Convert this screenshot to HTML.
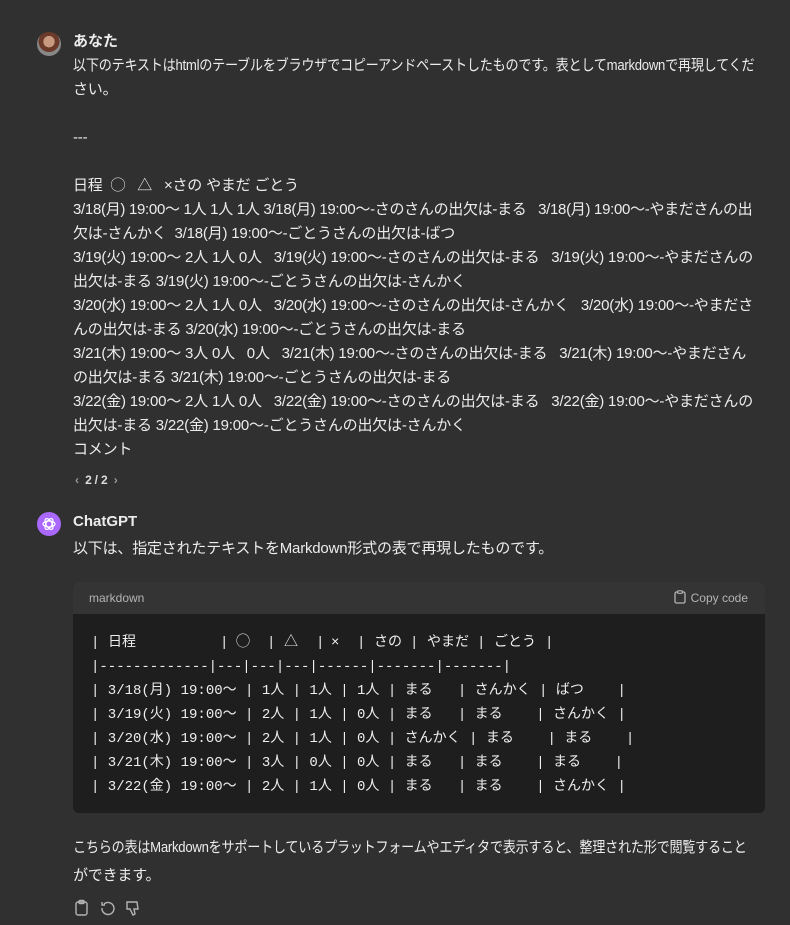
<!DOCTYPE html>
<html><head><meta charset="utf-8"><style>
body{margin:0;width:790px;height:925px;background:#303030;color:#ececec;font-family:"Liberation Sans","Noto Sans CJK JP",sans-serif;font-size:15px;overflow:hidden;position:relative}
.l{position:absolute;left:73px;white-space:nowrap;line-height:24px;letter-spacing:-0.2px}
.t{letter-spacing:-0.3px;transform:scaleX(0.875);transform-origin:0 0}
.b{font-weight:bold;letter-spacing:0}
.av{position:absolute;left:37px;width:24px;height:24px;border-radius:50%}
.code{position:absolute;left:73px;top:582px;width:692px;height:231px;border-radius:6px;overflow:hidden;background:#1e1e1e}
.hd{height:32px;background:#343434;color:#b4b4b4;font-size:12px;line-height:32px;padding-left:16px;position:relative}
.c{position:absolute;left:18px;white-space:pre;font-family:"Liberation Mono","Noto Sans CJK JP",monospace;font-size:14px;line-height:24px;color:#eee}
.h{position:absolute;top:49px;white-space:pre;font-family:"Liberation Mono","Noto Sans CJK JP",monospace;font-size:14px;line-height:24px;color:#eee}
</style></head><body>
<div class="av" style="top:32px;background:radial-gradient(circle at 50% 40%,#c89a80 0 30%,#6b3a2a 31% 55%,#888 56%)"></div>
<div class="l b" style="top:30px">あなた</div>
<div class="l t" style="top:54px">以下のテキストはhtmlのテーブルをブラウザでコピーアンドペーストしたものです。表としてmarkdownで再現してくだ</div>
<div class="l" style="top:78px">さい。</div>
<div class="l" style="top:126px">---</div>
<div class="l" style="top:174px">日程&nbsp; ◯&nbsp;&nbsp; △&nbsp;&nbsp; ×さの やまだ ごとう</div>
<div class="l" style="top:198px;letter-spacing:-0.3px">3/18(月) 19:00〜 1人 1人 1人 3/18(月) 19:00〜-さのさんの出欠は-まる&nbsp;&nbsp; 3/18(月) 19:00〜-やまださんの出</div>
<div class="l" style="top:222px">欠は-さんかく&nbsp; 3/18(月) 19:00〜-ごとうさんの出欠は-ばつ</div>
<div class="l" style="top:246px">3/19(火) 19:00〜 2人 1人 0人&nbsp;&nbsp; 3/19(火) 19:00〜-さのさんの出欠は-まる&nbsp;&nbsp; 3/19(火) 19:00〜-やまださんの</div>
<div class="l" style="top:270px">出欠は-まる 3/19(火) 19:00〜-ごとうさんの出欠は-さんかく</div>
<div class="l" style="top:294px">3/20(水) 19:00〜 2人 1人 0人&nbsp;&nbsp; 3/20(水) 19:00〜-さのさんの出欠は-さんかく&nbsp;&nbsp; 3/20(水) 19:00〜-やまださ</div>
<div class="l" style="top:318px">んの出欠は-まる 3/20(水) 19:00〜-ごとうさんの出欠は-まる</div>
<div class="l" style="top:342px">3/21(木) 19:00〜 3人 0人&nbsp;&nbsp; 0人&nbsp;&nbsp; 3/21(木) 19:00〜-さのさんの出欠は-まる&nbsp;&nbsp; 3/21(木) 19:00〜-やまださん</div>
<div class="l" style="top:366px">の出欠は-まる 3/21(木) 19:00〜-ごとうさんの出欠は-まる</div>
<div class="l" style="top:390px">3/22(金) 19:00〜 2人 1人 0人&nbsp;&nbsp; 3/22(金) 19:00〜-さのさんの出欠は-まる&nbsp;&nbsp; 3/22(金) 19:00〜-やまださんの</div>
<div class="l" style="top:414px">出欠は-まる 3/22(金) 19:00〜-ごとうさんの出欠は-さんかく</div>
<div class="l" style="top:438px">コメント</div>
<div class="l" style="top:468px;font-size:12px;color:#ddd;font-weight:bold;left:75px"><span style="color:#999">‹</span>&nbsp; 2 / 2&nbsp; <span style="color:#999">›</span></div>
<div class="av" style="top:512px;background:#ab68ff"><svg width="24" height="24" viewBox="0 0 24 24"><g fill="none" stroke="#fff" stroke-width="1.2"><ellipse cx="12" cy="12" rx="6" ry="3"/><ellipse cx="12" cy="12" rx="6" ry="3" transform="rotate(60 12 12)"/><ellipse cx="12" cy="12" rx="6" ry="3" transform="rotate(120 12 12)"/></g></svg></div>
<div class="l b" style="top:510px">ChatGPT</div>
<div class="l" style="top:537px">以下は、指定されたテキストをMarkdown形式の表で再現したものです。</div>
<div class="code">
<div class="hd">markdown<span style="position:absolute;right:17px;top:0"><svg width="12" height="14" viewBox="0 0 12 14" style="vertical-align:-2px;margin-right:5px"><rect x="1" y="2" width="10" height="11" rx="1.5" fill="none" stroke="#b4b4b4" stroke-width="1.3"/><rect x="3.5" y="0.8" width="5" height="2.5" rx="0.8" fill="#343434" stroke="#b4b4b4" stroke-width="1.2"/></svg>Copy code</span></div>
<span class="h" style="left:18px">|</span><span class="h" style="left:35px">日程</span>
<span class="h" style="left:147px">|</span><span class="h" style="left:163px">◯</span>
<span class="h" style="left:194px">|</span><span class="h" style="left:211px">△</span>
<span class="h" style="left:243px">|</span><span class="h" style="left:258px">×</span>
<span class="h" style="left:284px">|</span><span class="h" style="left:301px">さの</span>
<span class="h" style="left:337px">|</span><span class="h" style="left:354px">やまだ</span>
<span class="h" style="left:404px">|</span><span class="h" style="left:421px">ごとう</span>
<span class="h" style="left:472px">|</span>
<div class="c" style="top:73px">|-------------|---|---|---|------|-------|-------|</div>
<div class="c" style="top:97px">| 3/18(月) 19:00〜 | 1人 | 1人 | 1人 | まる   | さんかく | ばつ    |</div>
<div class="c" style="top:121px">| 3/19(火) 19:00〜 | 2人 | 1人 | 0人 | まる   | まる    | さんかく |</div>
<div class="c" style="top:145px">| 3/20(水) 19:00〜 | 2人 | 1人 | 0人 | さんかく | まる    | まる    |</div>
<div class="c" style="top:169px">| 3/21(木) 19:00〜 | 3人 | 0人 | 0人 | まる   | まる    | まる    |</div>
<div class="c" style="top:193px">| 3/22(金) 19:00〜 | 2人 | 1人 | 0人 | まる   | まる    | さんかく |</div>
</div>
<div class="l t" style="top:836px">こちらの表はMarkdownをサポートしているプラットフォームやエディタで表示すると、整理された形で閲覧すること</div>
<div class="l" style="top:864px">ができます。</div>
<svg style="position:absolute;left:74px;top:899px" width="80" height="18" viewBox="0 0 80 18"><g fill="none" stroke="#b4b4b4" stroke-width="1.4"><rect x="2" y="3" width="11" height="13" rx="2"/><rect x="5" y="1.5" width="5" height="3" rx="1"/><path d="M30 5a6 6 0 1 1-2 4M28 3v3h3"/><path d="M56 3h7l1 7h-4l1 5-2 1-3-6H53V3z"/></g></svg>
</body></html>
